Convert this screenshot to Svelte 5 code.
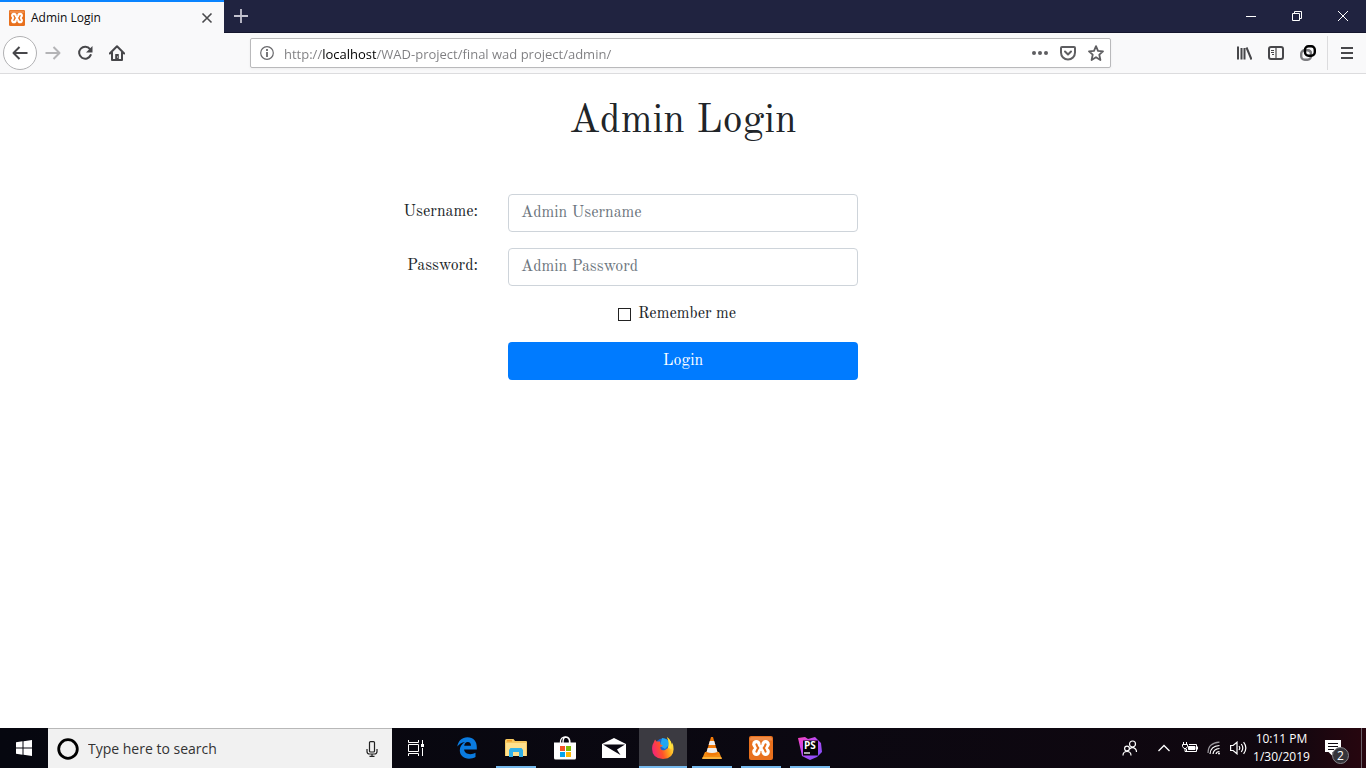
<script>
  let address = $state('http://localhost/WAD-project/final wad project/admin/');
  let username = $state('');
  let password = $state('');
  let remember = $state(false);
  let query = $state('');
</script>

{#snippet xampp(size)}
  <svg width={size} height={size} viewBox="0 0 24 24" aria-hidden="true">
    <rect width="24" height="24" rx="2" fill="#e8701d" />
    <path d="M1 3Q1 1 3 1h18Q23 1 23 3v1.500H1z" fill="#f08c48" />
    <g fill="#fff">
      <circle cx="7.400" cy="8.300" r="4.200" /><circle cx="16.600" cy="8.300" r="4.200" />
      <circle cx="7.400" cy="15.700" r="4.200" /><circle cx="16.600" cy="15.700" r="4.200" />
      <path d="M5 10h14v4H5zM10 9h4v6h-4z" />
    </g>
    <path d="M7.400 8.400Q8.200 10.800 9.300 12 8.200 13.200 7.400 15.600M16.600 8.400Q15.800 10.800 14.700 12q1.100 1.200 1.900 3.600" fill="none" stroke="#e8701d" stroke-width="2" stroke-linecap="round" stroke-linejoin="round" />
    <path d="M2.500 10.800L4.800 12l-2.300 1.200zM21.500 10.800L19.200 12l2.300 1.200z" fill="#e8701d" />
  </svg>
{/snippet}

<div class="screen">
  <header>
    <div class="tabs">
      <div class="tab">
        {@render xampp(16)}
        <span class="tab-title">Admin Login</span>
        <button class="tab-close" aria-label="Close tab">
          <svg width="12" height="12" viewBox="0 0 12 12"><path d="M1.500 1.500l9 9M10.500 1.500l-9 9" stroke="#4a4a4d" stroke-width="1.600" /></svg>
        </button>
      </div>
      <button class="new-tab" aria-label="New tab">
        <svg width="16" height="16" viewBox="0 0 16 16"><path d="M8 1v14M1 8h14" stroke="#c3c3cf" stroke-width="1.800" /></svg>
      </button>
      <div class="window-controls">
        <button aria-label="Minimize"><svg width="10" height="10" viewBox="0 0 10 10"><path d="M0 5.500h10" stroke="#fff" /></svg></button>
        <button aria-label="Restore"><svg width="10" height="10" viewBox="0 0 10 10"><path d="M.5 2.500h7v7h-7zM2.500 2.500v-2h7v7h-2" fill="none" stroke="#fff" /></svg></button>
        <button aria-label="Close"><svg width="10" height="10" viewBox="0 0 10 10"><path d="M0 0l10 10M10 0L0 10" stroke="#fff" /></svg></button>
      </div>
    </div>

    <div class="toolbar">
      <button class="back" aria-label="Back">
        <svg width="16" height="16" viewBox="0 0 16 16"><path d="M15.500 8H1.500M7.500 2l-6 6 6 6" fill="none" stroke="#47474a" stroke-width="2" stroke-linejoin="round" /></svg>
      </button>
      <button class="tool" aria-label="Forward">
        <svg width="16" height="16" viewBox="0 0 16 16"><path d="M.5 8h14M8.500 2l6 6-6 6" fill="none" stroke="#b4b4b6" stroke-width="2" stroke-linejoin="round" /></svg>
      </button>
      <button class="tool" aria-label="Reload">
        <svg width="16" height="16" viewBox="0 0 16 16"><path d="M13 4.200A6 6 0 1 0 13.700 10" fill="none" stroke="#47474a" stroke-width="2" stroke-linecap="round" /><path d="M15.500 1v6.500H9z" fill="#47474a" /></svg>
      </button>
      <button class="tool" aria-label="Home">
        <svg width="16" height="16" viewBox="0 0 16 16"><path d="M.8 8.500L8 1.300l7.200 7.200M3 7.500V15h10V7.500" fill="none" stroke="#47474a" stroke-width="2" stroke-linecap="round" stroke-linejoin="round" /><path d="M6.200 15V9.500q0-.5.500-.5h2.600q.5 0 .5.500V15z" fill="#47474a" /><path d="M8 12h1" stroke="#f9f9fa" /></svg>
      </button>
      <div class="urlbar">
        <svg width="14" height="14" viewBox="0 0 14 14" aria-hidden="true"><circle cx="7" cy="7" r="6.300" fill="none" stroke="#69696c" stroke-width="1.200" /><path d="M7 3v2M7 6v5" stroke="#69696c" stroke-width="1.800" /></svg>
        <input class="address" aria-label="Address" spellcheck="false" bind:value={address} />
        <button class="page-action" aria-label="Page actions">
          <svg width="16" height="16" viewBox="0 0 16 16" fill="#5e5e61"><circle cx="2" cy="8" r="2" /><circle cx="8" cy="8" r="2" /><circle cx="14" cy="8" r="2" /></svg>
        </button>
        <button class="page-action" aria-label="Save to Pocket">
          <svg width="16" height="16" viewBox="0 0 16 16" fill="none" stroke="#5e5e61" stroke-width="2" stroke-linecap="round" stroke-linejoin="round"><path d="M2 2h12q1 0 1 1v4.500a7 7 0 0 1-14 0V3q0-1 1-1z" /><path d="M5 6.500l3 3 3-3" /></svg>
        </button>
        <button class="page-action" aria-label="Bookmark this page">
          <svg width="16" height="16" viewBox="0 0 16 16"><path d="M8 1.200l2 4.600 5 .5-3.700 3.400L12.400 15 8 12.200 3.600 15l1.100-5.300L1 6.300l5-.5z" fill="none" stroke="#5e5e61" stroke-width="1.800" stroke-linejoin="round" /></svg>
        </button>
      </div>
      <button class="tool" aria-label="Library">
        <svg width="16" height="16" viewBox="0 0 16 16"><path d="M2 1.500v13M5.500 3v11.500M8.500 3v11.500M10.500 2.500l5 12" stroke="#47474a" stroke-width="2" /></svg>
      </button>
      <button class="tool" aria-label="Sidebars">
        <svg width="16" height="16" viewBox="0 0 16 16" fill="none" stroke="#47474a"><rect x="1" y="2" width="14" height="12" rx="2" stroke-width="2" /><path d="M8 2v12" stroke-width="1.200" /><path d="M3 5.500h3M3 7.500h3M4 9.500h2" /></svg>
      </button>
      <button class="tool" aria-label="Linked sessions">
        <svg width="16" height="16" viewBox="0 0 16 16" fill="none" stroke-width="2.400"><rect x="1.200" y="5.300" width="9.800" height="9.500" rx="3.500" stroke="#7d7d80" /><rect x="5" y="1.200" width="9.800" height="9.500" rx="3.500" stroke="#000" /><path d="M8 5.300q3 0 3 3" stroke="#7d7d80" stroke-width="2" /></svg>
      </button>
      <span class="divider"></span>
      <button class="tool" aria-label="Menu">
        <svg width="16" height="16" viewBox="0 0 16 16"><path d="M2 3h12M2 8h12M2 13h12" stroke="#47474a" stroke-width="2" /></svg>
      </button>
    </div>
  </header>

  <main>
    <h1>Admin Login</h1>
    <form onsubmit={(e) => e.preventDefault()}>
      <label class="caption" for="username">Username:</label>
      <input class="field" id="username" type="text" placeholder="Admin Username" bind:value={username} />
      <label class="caption" for="password">Password:</label>
      <input class="field" id="password" type="password" placeholder="Admin Password" bind:value={password} />
      <div class="remember">
        <input id="remember" type="checkbox" bind:checked={remember} />
        <label for="remember">Remember me</label>
      </div>
      <button class="login" type="submit">Login</button>
    </form>
  </main>

  <footer>
    <button class="task" aria-label="Start">
      <svg width="16" height="16" viewBox="0 0 16 16" fill="#fff"><path d="M0 2.200l6.500-.9v6.200H0zM7.500 1.200L16 0v7.500H7.500zM0 8.500h6.500v6.200L0 13.800zM7.500 8.500H16V16l-8.500-1.200z" /></svg>
    </button>
    <div class="search">
      <svg width="22" height="22" viewBox="0 0 22 22" aria-hidden="true"><circle cx="11" cy="11" r="9.300" fill="none" stroke="#000" stroke-width="2.800" /></svg>
      <input aria-label="Search" placeholder="Type here to search" bind:value={query} />
      <svg width="12" height="16" viewBox="0 0 12 16" aria-hidden="true" fill="none" stroke="#222" stroke-width="1.200"><rect x="3.500" y=".6" width="5" height="10.400" rx="1" /><path d="M1 8v2.500q0 2.500 2.500 2.500h5q2.500 0 2.500-2.500V8M6 13v2.500M3.500 15.400h5" /></svg>
    </div>
    <button class="task view" aria-label="Task view">
      <svg width="16" height="16" viewBox="0 0 16 16" fill="none" stroke="#fff"><path d="M.5 0v2.500h10V0M.5 16v-2.500h10V16M.5 4.500h10v7H.5zM14.500 0v4M14.500 8v8" /><path d="M13 4h3v3h-3z" fill="#fff" stroke="none" /></svg>
    </button>
    <div class="apps">
      <button class="task" aria-label="Edge">
        <svg width="20" height="22" viewBox="0 0 20 22"><path d="M.3 9.600C1.200 3.900 5 .3 10.400.3c6 0 9.400 4.200 9.400 9.700v2.600H7.100c.2 3.200 3 4.600 6.100 4.600 2 0 3.900-.6 5.300-1.400v4.300c-1.800 1-4.200 1.600-6.500 1.600C6.400 21.700 2.800 18.300 2.800 13.300c0-3.700 2-6.700 5.200-8.100C4.800 5.300 2 7 .3 9.600zM7.200 8.800h6.800c0-2.300-1.100-3.700-3.200-3.700-2 0-3.300 1.500-3.600 3.700z" fill="#0a7be0" /></svg>
      </button>
      <button class="task open" aria-label="File Explorer">
        <svg width="22" height="18" viewBox="0 0 22 18"><path d="M0 1.500Q0 0 1.500 0h7l1.500 2H21q1 0 1 1v14H0z" fill="#f5c75f" /><path d="M1 4h20v13H1z" fill="#fee08d" /><path d="M2 1h5v1.500H2z" fill="#ef9b28" /><path d="M4 18v-7l1.500-2h11l1.500 2v7h-4v-5H8v5z" fill="#31b1e8" /></svg>
      </button>
      <button class="task" aria-label="Store">
        <svg width="24" height="24" viewBox="0 0 24 24"><path d="M7.500 8V5.500a4.500 4.500 0 0 1 9 0V8M10 7c0-5 1-6 3-6s4 2 4 6" fill="none" stroke="#fff" stroke-width="1.300" /><path d="M1 6.500h22V22q0 1.500-1.500 1.500h-19Q1 23.500 1 22z" fill="#fff" /><path d="M7 10h5v5H7z" fill="#f35325" /><path d="M13 10h5v5h-5z" fill="#81bc06" /><path d="M7 16h5v5H7z" fill="#05a6f0" /><path d="M13 16h5v5h-5z" fill="#ffba08" /></svg>
      </button>
      <button class="task" aria-label="Mail">
        <svg width="24" height="20" viewBox="0 0 24 20"><path d="M0 6L12 0l12 6v14H0z" fill="#fff" /><path d="M1 6.500h22l-8 5 3.500 5.500L10 12z" fill="#0a0812" /></svg>
      </button>
      <button class="task open active" aria-label="Firefox">
        <svg width="22" height="24" viewBox="0 0 22 24">
          <defs><linearGradient id="fox" x1="0" y1=".6" x2="1" y2=".3"><stop offset="0" stop-color="#f42477" /><stop offset=".4" stop-color="#ff5229" /><stop offset=".7" stop-color="#ffa51b" /><stop offset="1" stop-color="#ffe94a" /></linearGradient></defs>
          <circle cx="11" cy="11" r="8.500" fill="#1966d2" />
          <path d="M10 2q6 0 8 6l-5 5-5-3z" fill="#21a7f2" />
          <path d="M1.500 7L3 3.500 4.500 5.500 8 5.500 8.500 8.500 11 9.500 8 11.500q1 3.500 5 2.500l3-2q2-5-1-11Q19 5 20 9l.5-2.500Q25 22 11 23-2 22 .5 9z" fill="url(#fox)" />
          <path d="M15 1q3 6 1 11l3.500 1Q21 5 15 1z" fill="#ffe43b" />
        </svg>
      </button>
      <button class="task open" aria-label="VLC">
        <svg width="20" height="24" viewBox="0 0 20 24"><path d="M3 16h14l3 7H0z" fill="#f48b12" /><path d="M9 1h2l5 17q-6 3-12 0z" fill="#f27a0a" /><path d="M7.800 5h4.400l1.200 4H6.600zM5.700 12h8.600l1.200 4q-5.500 2-11 0z" fill="#eee" /><path d="M.5 22h19" stroke="#ffc04d" stroke-width="1.500" /></svg>
      </button>
      <button class="task open" aria-label="XAMPP">{@render xampp(24)}</button>
      <button class="task open" aria-label="PhpStorm">
        <svg width="24" height="24" viewBox="0 0 24 24">
          <defs><linearGradient id="storm" x1="0" y1="0" x2="1" y2="1"><stop offset="0" stop-color="#fb43bd" /><stop offset=".45" stop-color="#b74af7" /><stop offset="1" stop-color="#7650f3" /></linearGradient></defs>
          <path d="M0 2l7-1 3 2 7-2 6 6 1 9-5 5-7 3-8-4z" fill="url(#storm)" />
          <path d="M5 4.500h15v15H5z" fill="#050505" />
          <text x="6" y="13" class="storm-mark">PS</text>
          <path d="M6 17h6" stroke="#fff" stroke-width="1.300" />
        </svg>
      </button>
    </div>
    <div class="tray">
      <button class="people" aria-label="People">
        <svg width="16" height="16" viewBox="0 0 16 16" fill="none" stroke="#fff" stroke-width="1.200"><circle cx="10.500" cy="4" r="3" /><path d="M7.500 9q3-3 6 0 1 1 1 3" /><circle cx="5" cy="8.500" r="2.400" /><path d="M1 15.500q0-4 4-4t4 4" /></svg>
      </button>
      <button class="chevron" aria-label="Show hidden icons">
        <svg width="12" height="8" viewBox="0 0 12 8"><path d="M.5 7L6 1.500 11.500 7" fill="none" stroke="#fff" stroke-width="1.300" /></svg>
      </button>
      <button class="status" aria-label="Battery">
        <svg width="16" height="12" viewBox="0 0 16 12" fill="none" stroke="#fff"><path d="M1.500 0v3M4.500 0v3M.5 2.500h5v2l-1.500 2H2L.5 4.500zM3 6.500v3h2" /><path d="M7 2.500h7.500v7H4.500V7M15.500 4.500v3" /><path d="M6.500 4.500H13v3H6.500z" fill="#fff" /></svg>
      </button>
      <button class="status" aria-label="Network">
        <svg width="14" height="14" viewBox="0 0 14 14" fill="none" stroke="#fff" stroke-width="1.200"><path d="M1 12Q1 2 12.500 1.200" stroke="#9b989e" /><path d="M3 13Q3.500 5 12.500 4.500M6 13Q6.500 8 12.500 7.500M9 13q.5-2.500 3.500-2.500" /><circle cx="12" cy="12.500" r="1" fill="#fff" stroke="none" /></svg>
      </button>
      <button class="status" aria-label="Volume">
        <svg width="17" height="14" viewBox="0 0 17 14" fill="none" stroke="#fff" stroke-width="1.200"><path d="M.6 4.500h2.500L7 1.200v11.600L3.100 9.500H.6z" /><path d="M9 5q1.500 2 0 4M11.300 3q3 4 0 8M13.600 1.200q4.500 5.800 0 11.600" /></svg>
      </button>
      <time class="clock" datetime="2019-01-30T22:11"><span>10:11 PM</span><span>1/30/2019</span></time>
      <button class="notes" aria-label="Notifications">
        <svg width="16" height="16" viewBox="0 0 16 16"><path d="M0 0h16v12H7.500v4l-4-4H0z" fill="#fff" /><path d="M3 3.500h10M3 6.500h10M3 9.500h6" stroke="#0d0810" /></svg>
        <span class="badge">2</span>
      </button>
      <span class="peek"></span>
    </div>
  </footer>
</div>

<style>
  :global(body) { margin: 0; background: #fff; }
  .screen, .screen * { box-sizing: border-box; }
  .screen {
    min-height: 100vh;
    display: flex;
    flex-direction: column;
    font-family: "Open Sans", "Noto Sans", sans-serif;
    font-size: 12px;
    color: #0c0c0d;
  }
  svg { display: block; flex: none; }
  button {
    display: flex;
    align-items: center;
    justify-content: center;
    padding: 0;
    border: 0;
    background: none;
    font: inherit;
    color: inherit;
  }
  input { font: inherit; min-width: 0; }

  .tabs { display: flex; height: 33px; background: #202340; border-bottom: 1px solid #14162d; }
  .tab {
    display: flex;
    align-items: center;
    width: 224px;
    height: 33px;
    padding: 0 10px 0 9px;
    border-top: 2px solid #0a84ff;
    background: #f9f9fa;
  }
  .tab-title { flex: 1; margin-left: 6px; white-space: nowrap; }
  .tab-close { width: 14px; height: 20px; }
  .new-tab { width: 34px; }
  .window-controls { display: flex; margin-left: auto; }
  .window-controls button { width: 46px; }

  .toolbar {
    display: flex;
    align-items: center;
    height: 41px;
    padding: 0 3px;
    background: #f9f9fa;
    border-bottom: 1px solid #dcdcde;
  }
  .back { width: 34px; height: 34px; border: 1px solid #b1b1b3; border-radius: 50%; background: #fff; }
  .tool { width: 32px; height: 32px; }
  .urlbar {
    flex: 1;
    display: flex;
    align-items: center;
    height: 30px;
    margin: 0 117px;
    padding: 0 0 0 9px;
    border: 1px solid #b9b9bb;
    border-radius: 2px;
    background: #fff;
    box-shadow: 0 1px 3px #0000000d;
  }
  .address {
    flex: 1;
    height: 28px;
    margin-left: 10px;
    padding: 1px 0 0;
    border: 0;
    outline: 0;
    font-size: 13px;
    color: transparent;
    caret-color: #000;
    background: linear-gradient(90deg, #7d7d80 38px, #000 38px, #000 92px, #7d7d80 92px);
    background-clip: text;
    -webkit-background-clip: text;
  }
  .page-action { width: 28px; height: 28px; }
  .divider { width: 1px; height: 34px; margin: 0 3px; background: #dcdcde; }

  main {
    flex: 1;
    width: 100%;
    max-width: 1140px;
    margin: 0 auto;
    padding-top: 24px;
    font-family: "Old Standard TT", "Liberation Serif", serif;
    font-size: 16px;
    line-height: 24px;
    color: #212529;
  }
  h1 { margin: 0 0 48px; font-size: 40px; font-weight: 400; line-height: 48px; text-align: center; }
  form {
    display: grid;
    grid-template-columns: repeat(3, minmax(0, 1fr));
    row-gap: 16px;
  }
  .caption { grid-column: 1; padding: 6px 15px 0; text-align: right; }
  .field {
    grid-column: 2;
    height: 38px;
    margin: 0 15px;
    padding: 6px 12px;
    border: 1px solid #ced4da;
    border-radius: 4px;
    background: #fff;
    color: #495057;
  }
  .field::placeholder { color: #6c757d; opacity: 1; }
  .remember {
    grid-column: 2;
    display: flex;
    align-items: center;
    justify-content: center;
    gap: 7px;
    height: 24px;
    padding-right: 12px;
  }
  .remember input {
    appearance: none;
    width: 13px;
    height: 13px;
    margin: 0;
    border: 1px solid #222;
    background: #fff;
  }
  .remember input:checked { background: #007bff; }
  .login {
    grid-column: 2;
    height: 38px;
    margin: 0 15px;
    border-radius: 4px;
    background: #007bff;
    color: #fff;
  }

  footer { display: flex; height: 40px; background: linear-gradient(90deg, #06070f, #0b0811 60%, #10070f 94%, #28060f); color: #fff; }
  .task { width: 48px; height: 40px; }
  .search {
    display: flex;
    align-items: center;
    width: 344px;
    padding: 0 14px 0 9px;
    border-top: 1px solid #b8b8b8;
    background: #f1f1f1;
  }
  .search input {
    flex: 1;
    margin-left: 9px;
    padding: 0;
    border: 0;
    outline: 0;
    background: none;
    font-size: 14px;
    color: #222;
  }
  .search input::placeholder { color: #333; opacity: 1; }
  .apps { display: flex; gap: 1px; margin-left: 3px; }
  .open {
    background: linear-gradient(#76b9ed, #76b9ed) center bottom / 40px 2px no-repeat;
  }
  .active { background-color: #3b3a41; background-size: 48px 2px; }
  .storm-mark { font: 700 10px "Open Sans", sans-serif; fill: #fff; }
  .tray { display: flex; margin-left: auto; }
  .people { width: 36px; }
  .chevron { width: 30px; padding-left: 2px; }
  .status { width: 24px; }
  .clock {
    display: flex;
    flex-direction: column;
    justify-content: center;
    align-items: center;
    width: 63px;
    line-height: 18px;
    white-space: nowrap;
  }
  .notes { position: relative; width: 48px; padding-right: 8px; }
  .badge {
    position: absolute;
    left: 19px;
    top: 19px;
    width: 17px;
    height: 17px;
    border: 1px solid #85858a;
    border-radius: 50%;
    background: #35343a;
    line-height: 15px;
    text-align: center;
  }
  .peek { width: 1px; margin-right: 4px; background: #6a6068; }
</style>
